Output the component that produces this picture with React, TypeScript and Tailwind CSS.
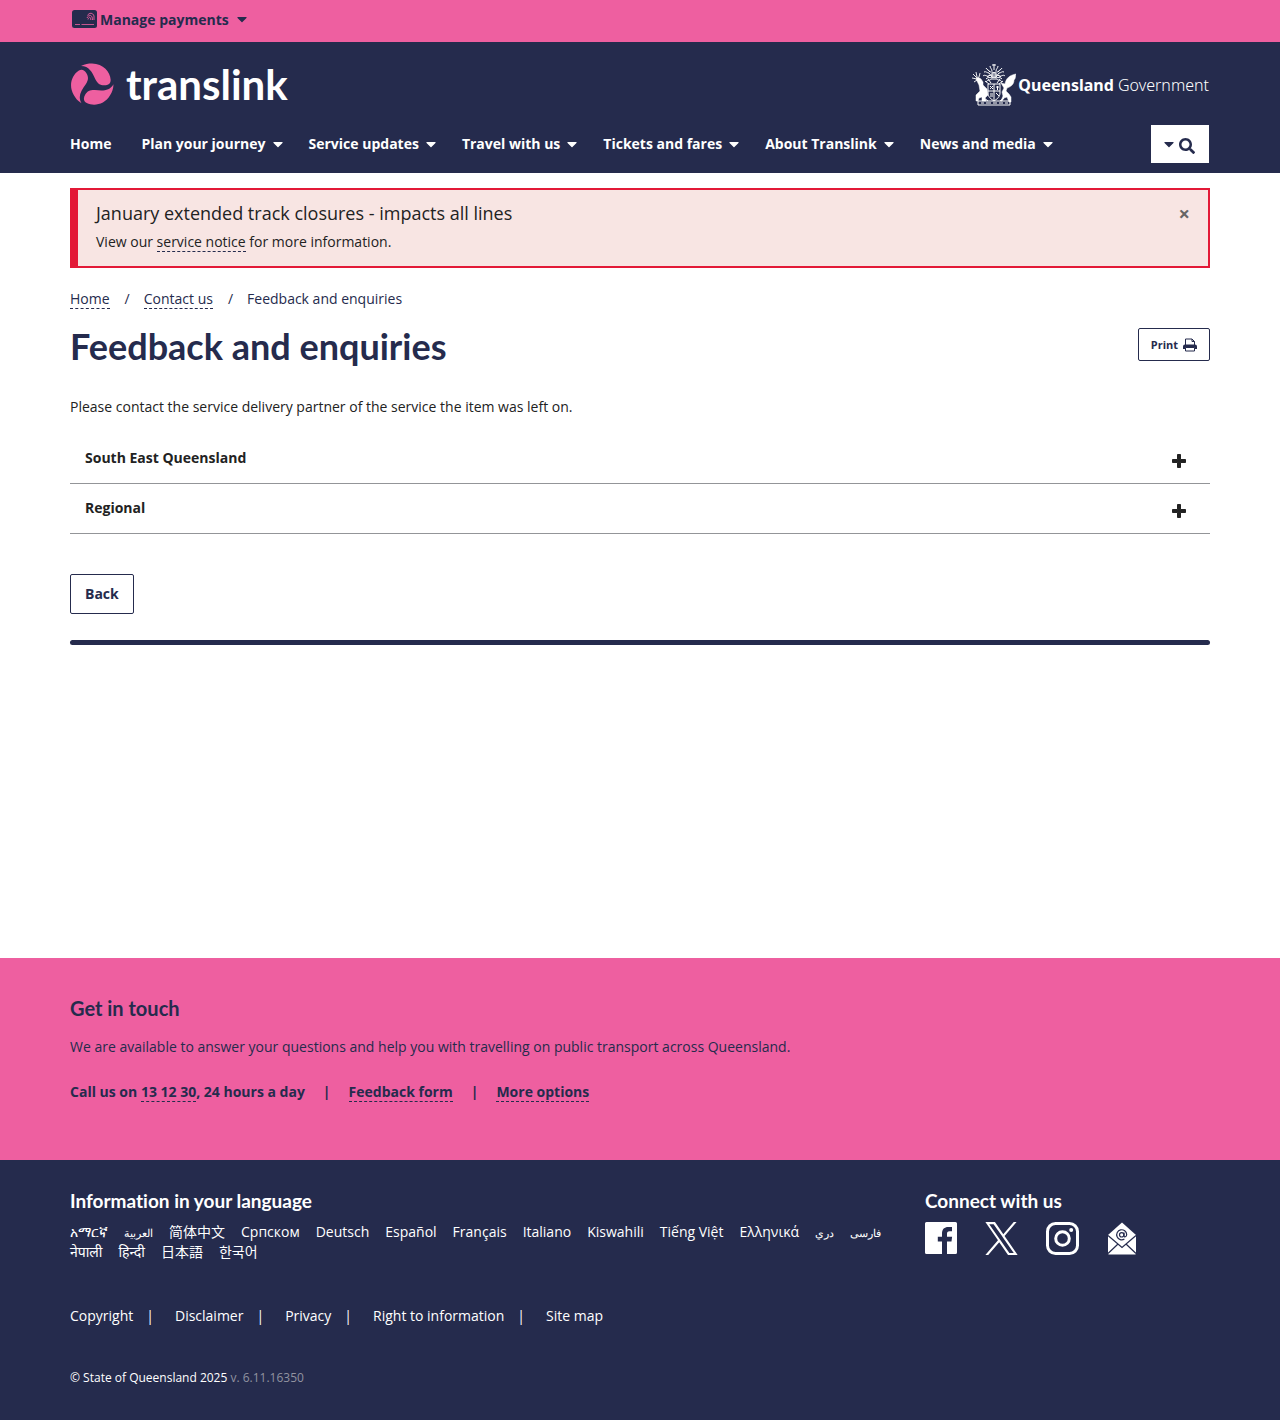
import React, { useState } from "react";
import { FaCaretDown, FaSearch } from "react-icons/fa";

const navItems = [
  "Plan your journey",
  "Service updates",
  "Travel with us",
  "Tickets and fares",
  "About Translink",
  "News and media",
];

const languages: { label: string; lang: string; small?: boolean }[] = [
  { label: "አማርኛ", lang: "am" },
  { label: "العربية", lang: "ar", small: true },
  { label: "简体中文", lang: "zh-Hans" },
  { label: "Српском", lang: "sr" },
  { label: "Deutsch", lang: "de" },
  { label: "Español", lang: "es" },
  { label: "Français", lang: "fr" },
  { label: "Italiano", lang: "it" },
  { label: "Kiswahili", lang: "sw" },
  { label: "Tiếng Việt", lang: "vi" },
  { label: "Ελληνικά", lang: "el" },
  { label: "دري", lang: "prs", small: true },
  { label: "فارسی", lang: "fa", small: true },
  { label: "नेपाली", lang: "ne" },
  { label: "हिन्दी", lang: "hi" },
  { label: "日本語", lang: "ja" },
  { label: "한국어", lang: "ko" },
];

const legalLinks = ["Copyright", "Disclaimer", "Privacy", "Right to information", "Site map"];

function Container({ children, className = "" }: { children: React.ReactNode; className?: string }) {
  return <div className={`mx-auto w-full max-w-[1170px] px-[15px] ${className}`}>{children}</div>;
}

function CardIcon() {
  return (
    <svg width="25" height="18" viewBox="0 0 25 18" className="mt-px" aria-hidden="true">
      <rect x="0" y="0" width="25" height="18" rx="2.500" fill="#252b4d" />
      <path d="M3 14.500h5M9.500 14.500H22" stroke="#ee5fa0" strokeWidth="1" opacity="0.8" />
      <g fill="none" stroke="#ee5fa0" strokeWidth="0.9">
        <path d="M15.500 5.500C17 2.500 21 2.500 22 6v4" />
        <path d="M15 8C17 4 20.500 4.500 20.500 10" />
        <path d="M16 9.500c1-3 2.800-3 2.800 .5" />
      </g>
    </svg>
  );
}

const blade =
  "M10.500 2.700C15 .3 18 0 22 0C34 0 41 9 41.500 17C41.700 21 39 22.800 35 22.800C30 22.800 28 21 25.500 16.500C22 9 19 2.700 10.500 2.700Z";

function Swirl() {
  return (
    <svg width="44" height="44" viewBox="-1 -1 46 45" fill="#ee5fa0" aria-hidden="true">
      <path d={blade} />
      <path d={blade} transform="rotate(120 22 22)" />
      <path d={blade} transform="rotate(240 22 22)" />
    </svg>
  );
}

function CoatOfArms() {
  return (
    <svg width="44" height="42" viewBox="0 0 44 42" fill="none" stroke="#fff" aria-hidden="true">
      <g strokeWidth="1">
        <path d="M14 4c1 2 3 2 4 4M18 2c0 2 2 3 2 5M22 0v6M20 1h4M26 2c0 2-2 3-2 5M30 4c-1 2-3 2-4 4M12 8c2-1 3 1 5 1M32 8c-2-1-3 1-5 1M11 12c2-2 4 1 6 0M33 12c-2-2-4 1-6 0" />
        <path d="M17 7c2 2 3 0 5 2c2-2 3 0 5-2M15 13c2-2 4-2 7-2s5 0 7 2M17 9l3 4M27 9l-3 4M14 15c3-3 5 0 8-2c3 2 5-1 8 2M20 9h4v4h-4z" />
        <path d="M14 18c2-3 4-1 5-3h6c1 2 3 0 5 3M16 15l3 4M28 15l-3 4M13 17l4 3M31 17l-4 3" />
        <path d="M16 20h12v9c0 4-3 6-6 8c-3-2-6-4-6-8zM22 20v16M16 27h12" />
        <path d="M18 22l3 3M21 22l-3 3M24 23h3M25.500 22v4M18 30h3M18 32h3M24 29l3 3" />
        <path d="M6 37h32v4H6zM9 39h3M14 39h5M21 39h4M27 39h4M33 39h3" />
        <path d="M12 34l4 3M32 34l-4 3" />
      </g>
      <g fill="#fff" strokeWidth="0.5">
        <path d="M4 15l2-2 3 2 2 3 0 3 4 4 1 6-3 3 1 3h-4l0-4-3 1-1 3H4l0-6 4-4-1-6z" />
        <path d="M29 19l4 1c1-6 5-9 11-10c-1 3 0 4-2 6c0 5-4 7-7 8l-1 3 3 3 2 3v5h-2l-2-5-3 1-2 3h-1l2-5-1-4 2-4z" />
      </g>
      <path d="M1 10l4 4M4 8l1 5M0 14l5 1M2 18l3-2M8 9l-1 4" strokeWidth="0.9" />
    </svg>
  );
}

function PrinterIcon() {
  return (
    <svg width="14" height="14" viewBox="0 0 14 14" aria-hidden="true">
      <path d="M2.500 7V1h6.500l2.500 2.500V7M9 1v2.500h2.500" fill="none" stroke="#252b4d" />
      <path d="M0 8.500A2 2 0 0 1 2 6.500h10a2 2 0 0 1 2 2V11h-2.500V9.500h-9V11H0z" fill="#252b4d" />
      <path d="M2.500 9.500h9v3.500h-9z" fill="#fff" stroke="#252b4d" />
    </svg>
  );
}

function PlusIcon() {
  return (
    <svg width="14" height="14" viewBox="0 0 14 14" className="mt-1.5" aria-hidden="true">
      <path d="M5.500 .5h3v5h5v3h-5v5h-3v-5h-5v-3h5z" fill="#222" stroke="#222" strokeWidth="1" strokeLinejoin="round" />
    </svg>
  );
}

function FacebookIcon() {
  return (
    <svg width="32" height="32" viewBox="0 0 32 32" aria-hidden="true">
      <path fill="#fff" d="M1.500 0h29A1.500 1.500 0 0 1 32 1.500v29a1.500 1.500 0 0 1-1.500 1.500H22V19.500h4.500l.6-4.800H22v-3c0-1.400.5-2.400 2.500-2.400H27V5.100c-.5-.1-2-.2-3.700-.2c-3.800 0-6.300 2.200-6.300 6.400v3.400h-4.200v4.800H17V32H1.500A1.500 1.500 0 0 1 0 30.500v-29A1.500 1.500 0 0 1 1.500 0z" />
    </svg>
  );
}

function XIcon() {
  return (
    <svg width="33" height="33" viewBox="0 0 1200 1227" fill="#fff" aria-hidden="true">
      <path d="M714.163 519.284L1160.890 0H1055.030L667.137 450.887L357.328 0H0L468.492 681.821L0 1226.370H105.866L515.491 750.218L842.672 1226.370H1200L714.137 519.284H714.163ZM569.165 687.828L521.697 619.934L144.011 79.694H306.615L611.412 515.685L658.880 583.579L1055.080 1150.300H892.476L569.165 687.854V687.828Z" />
    </svg>
  );
}

function InstagramIcon() {
  return (
    <svg width="33" height="33" viewBox="0 0 33 33" fill="none" stroke="#fff" strokeWidth="3" aria-hidden="true">
      <rect x="1.500" y="1.500" width="30" height="30" rx="8" />
      <circle cx="16.500" cy="16.500" r="6.800" />
      <circle cx="25.200" cy="8" r="2" fill="#fff" stroke="none" />
    </svg>
  );
}

function MailIcon() {
  return (
    <svg width="30" height="33" viewBox="0 0 30 33" aria-hidden="true">
      <path d="M1 13L15 .5L29 13v18.500a1 1 0 0 1-1 1H2a1 1 0 0 1-1-1z" fill="#fff" />
      <path d="M1 13.500L15 25.500L29 13.500M1 31.500L11 22M29 31.500L19 22" fill="none" stroke="#252b4d" strokeWidth="1.200" />
      <g fill="none" stroke="#252b4d" strokeWidth="1.200">
        <circle cx="14.700" cy="12.800" r="2.200" />
        <path d="M17 10.500v3.300c0 1.800 2.700 1.300 2.700-1.300a5 5 0 1 0-2.300 4.500" />
      </g>
    </svg>
  );
}

function Bar() {
  return <span aria-hidden="true">|</span>;
}

export default function App() {
  const [open, setOpen] = useState<string | null>(null);
  const [notice, setNotice] = useState(true);
  const dashed = "border-b border-dashed border-[#252b4d]";
  const footerHeading = "font-['Lato',sans-serif] text-[19px] leading-[26px] font-bold [font-variant-ligatures:none]";

  return (
    <div className="flex min-h-screen flex-col bg-white font-['Open_Sans','Noto_Sans','Noto_Sans_CJK_SC',sans-serif] text-sm leading-5 text-[#222]">
      <div className="bg-[#ee5fa0] text-[#252b4d]">
        <Container className="flex h-[42px] items-start pt-[9px]">
          <button type="button" className="flex items-start gap-[3px] pl-0.5 text-sm leading-[22px] font-bold">
            <CardIcon />
            Manage payments
            <FaCaretDown className="mt-0.5 ml-0.5 size-4" />
          </button>
        </Container>
      </div>

      <header className="bg-[#252b4d] text-white">
        <Container>
          <div className="flex items-start justify-between pt-5">
            <a href="#home" aria-label="translink" className="flex items-center gap-3">
              <Swirl />
              <span className="font-['Lato',sans-serif] text-[42px] leading-[44px] font-bold">translink</span>
            </a>
            <a href="#qld" className="flex items-center gap-0.5 pt-0.5 pr-px font-['Noto_Sans',sans-serif] text-base">
              <CoatOfArms />
              <span>
                <b>Queensland</b> <span className="font-light">Government</span>
              </span>
            </a>
          </div>
          <nav className="flex items-start justify-between pt-[19px] pb-2.5">
            <div className="flex flex-wrap gap-x-[23px] pt-[9px] font-bold">
              <a href="#home" className="mr-[7px]">Home</a>
              {navItems.map((item) => (
                <button type="button" key={item} className="flex items-center gap-1 font-bold">
                  {item}
                  <FaCaretDown className="size-4" />
                </button>
              ))}
            </div>
            <button type="button" aria-label="Search" className="mr-px flex h-[38px] w-[58px] items-center justify-center gap-0.5 bg-white pr-1 text-[#252b4d]">
              <FaCaretDown className="size-4" />
              <FaSearch className="mt-1 size-4" />
            </button>
          </nav>
        </Container>
      </header>

      <main className="grow">
        <Container className="pt-[15px] pb-8">
          {notice && (
            <section className="flex h-20 items-start justify-between border-2 border-l-8 border-[#e31937] bg-[#f8e5e3] px-[18px] pt-[11px]">
              <div>
                <h2 className="text-lg leading-6">January extended track closures - impacts all lines</h2>
                <p className="mt-[7px]">
                  View our <a href="#notice" className={dashed}>service notice</a> for more information.
                </p>
              </div>
              <button type="button" aria-label="Close" onClick={() => setNotice(false)} className="text-xl leading-[26px] font-bold text-[#666]">
                ×
              </button>
            </section>
          )}

          <nav aria-label="Breadcrumb" className="mt-[21px] flex text-[#252b4d]">
            <a href="#home" className="h-5 border-b border-dashed border-[#252b4d]">Home</a>
            <span className="pr-[14px] pl-[15px]">/</span>
            <a href="#contact" className="h-5 border-b border-dashed border-[#252b4d]">Contact us</a>
            <span className="pr-[14px] pl-[15px]">/</span>
            <span>Feedback and enquiries</span>
          </nav>

          <div className="mt-[17px] flex items-start justify-between">
            <h1 className="font-['Lato',sans-serif] text-4xl leading-10 font-bold text-[#252b4d]">Feedback and enquiries</h1>
            <button type="button" className="mt-0.5 flex h-[33px] items-center gap-[5px] rounded-xs border border-[#252b4d] px-3 text-[11px] font-bold text-[#252b4d]">
              Print
              <PrinterIcon />
            </button>
          </div>

          <p className="mt-[31px]">Please contact the service delivery partner of the service the item was left on.</p>

          <div className="mt-[17px]">
            {["South East Queensland", "Regional"].map((title) => (
              <section key={title} className="border-b border-[#939598]">
                <button
                  type="button"
                  aria-expanded={open === title}
                  onClick={() => setOpen(open === title ? null : title)}
                  className="flex h-[49px] w-full items-center justify-between pr-6 pb-0.5 pl-[15px] text-left font-bold"
                >
                  {title}
                  <PlusIcon />
                </button>
              </section>
            ))}
          </div>

          <button type="button" className="mt-10 h-10 rounded-xs border border-[#252b4d] px-3.5 font-bold text-[#252b4d]">
            Back
          </button>
          <hr className="mt-[26px] h-[5px] rounded-full border-0 bg-[#252b4d]" />
        </Container>
      </main>

      <section className="bg-[#ee5fa0] text-[#252b4d]">
        <Container className="pt-[38px] pb-[58px]">
          <h2 className="font-['Lato',sans-serif] text-xl leading-6 font-bold">Get in touch</h2>
          <p className="mt-[17px]">
            We are available to answer your questions and help you with travelling on public transport across Queensland.
          </p>
          <div className="mt-[25px] flex flex-wrap gap-x-[18px] font-bold">
            <span>
              Call us on <a href="tel:131230" className={dashed}>13 12 30</a>, 24 hours a day
            </span>
            <Bar />
            <a href="#feedback" className="h-5 border-b border-dashed border-[#252b4d]">Feedback form</a>
            <Bar />
            <a href="#more" className="h-5 border-b border-dashed border-[#252b4d]">More options</a>
          </div>
        </Container>
      </section>

      <footer className="bg-[#252b4d] text-white">
        <Container className="pt-7 pb-8">
          <div className="flex">
            <section className="w-3/4 pr-[30px]">
              <h2 className={footerHeading}>Information in your language</h2>
              <ul className="mt-2 flex flex-wrap gap-x-4">
                {languages.map((l) => (
                  <li key={l.label} className="h-5">
                    <a href="#lang" lang={l.lang} className={l.small ? "text-[11px]" : ""}>{l.label}</a>
                  </li>
                ))}
              </ul>
            </section>
            <section>
              <h2 className={footerHeading}>Connect with us</h2>
              <div className="mt-2 flex gap-7">
                <a href="#facebook" aria-label="Facebook"><FacebookIcon /></a>
                <a href="#x" aria-label="X"><XIcon /></a>
                <a href="#instagram" aria-label="Instagram"><InstagramIcon /></a>
                <a href="#email" aria-label="Email"><MailIcon /></a>
              </div>
            </section>
          </div>
          <ul className="mt-11 flex flex-wrap">
            {legalLinks.map((l, i) => (
              <li key={l} className="flex">
                <a href="#legal">{l}</a>
                {i < legalLinks.length - 1 && <span aria-hidden="true" className="pr-[21px] pl-[13px]">|</span>}
              </li>
            ))}
          </ul>
          <p className="mt-[42px] text-xs leading-5">
            © State of Queensland 2025 <span className="text-[#9193a0]">v. 6.11.16350</span>
          </p>
        </Container>
      </footer>
    </div>
  );
}
